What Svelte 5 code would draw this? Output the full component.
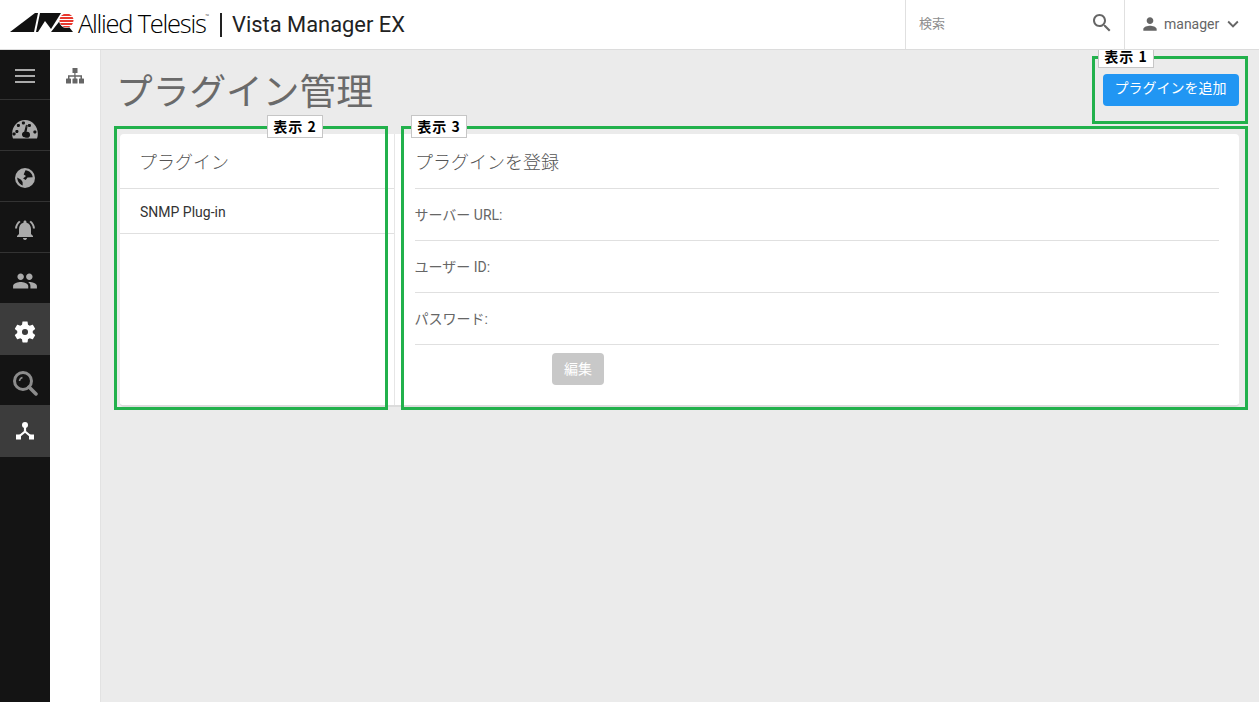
<script>
  const navTop = [
    { id: 'menu' }, { id: 'gauge' }, { id: 'globe' }, { id: 'bell' }, { id: 'people' },
    { id: 'gear', active: true }, { id: 'loupe' }, { id: 'node', active: true }
  ];
  const fields = ['サーバー URL:', 'ユーザー ID:', 'パスワード:'];
</script>

<div class="page">
  <header class="top">
    <div class="brand">
      <svg class="mark" width="66" height="22" viewBox="0 0 66 22">
        <polygon points="0,20 25,1 28,1 24,20" fill="#111" />
        <polygon points="30,1 51,1 41,17 35,9 28,20 26,20" fill="#111" />
        <polygon points="41,20 52,6 63,20" fill="#111" />
        <circle cx="56.500" cy="8.500" r="7.500" fill="#fff" />
        <clipPath id="ball"><circle cx="56.500" cy="8.500" r="7" /></clipPath>
        <g clip-path="url(#ball)" fill="#e8382e">
          <rect x="48" y="2" width="17" height="2" />
          <rect x="48" y="5" width="17" height="2" />
          <rect x="48" y="8" width="17" height="2" />
          <rect x="48" y="11" width="17" height="2" />
          <rect x="48" y="14" width="17" height="2" />
        </g>
      </svg>
      <span class="at">Allied Telesis<sup>™</sup></span>
      <span class="bar"></span>
      <span class="vm">Vista Manager EX</span>
    </div>
    <div class="search">
      <span class="ph">検索</span>
      <svg width="24" height="24" viewBox="0 0 24 24"><path fill="#666" d="M15.5 14h-.79l-.28-.27C15.41 12.59 16 11.11 16 9.5 16 5.91 13.09 3 9.5 3S3 5.91 3 9.5 5.91 16 9.5 16c1.61 0 3.09-.59 4.23-1.57l.27.28v.79l5 4.99L20.49 19l-4.99-5zm-6 0C7.01 14 5 11.99 5 9.5S7.01 5 9.5 5 14 7.01 14 9.5 11.99 14 9.5 14z" /></svg>
    </div>
    <div class="user">
      <svg width="20" height="20" viewBox="0 0 24 24"><path fill="#666" d="M12 12c2.21 0 4-1.79 4-4s-1.79-4-4-4-4 1.79-4 4 1.79 4 4 4zm0 2c-2.67 0-8 1.34-8 4v2h16v-2c0-2.66-5.33-4-8-4z" /></svg>
      <span>manager</span>
      <svg width="22" height="22" viewBox="0 0 24 24"><path fill="#666" d="M7.41 8.59L12 13.17l4.59-4.58L18 10l-6 6-6-6 1.41-1.41z" /></svg>
    </div>
  </header>

  <div class="body">
    <nav class="rail">
      {#each navTop as item}
        <div class="rail-item {item.id}" class:active={item.active}>
          {#if item.id === 'menu'}
            <svg width="24" height="24" viewBox="0 0 24 24"><path fill="#aaa" d="M2 5h20v2H2zM2 11h20v2H2zM2 17h20v2H2z" /></svg>
          {:else if item.id === 'gauge'}
            <svg width="26" height="22" viewBox="0 0 26 22"><path fill="#aaa" fill-rule="evenodd" d="M1 20.5C.4 19 .2 17.5.2 15.5.2 8 6 2 13 2s12.8 6 12.8 13.5c0 2-.2 3.500-.8 5zM6.500 13.500a1.600 1.600 0 1 0 0 .01zM3.700 16a1.600 1.600 0 1 0 0 .01zM8 7.500a1.600 1.600 0 1 0 0 .01zM13 5a1.600 1.600 0 1 0 0 .01zM19 7.500a1.600 1.600 0 1 0 0 .01zM24.500 14a1.600 1.600 0 1 0 0 .01zM13.300 13.500l1.500-6.500.9.200-1.100 6.700a3 3 0 1 1-2.600 2.800 3 3 0 0 1 1.300-3.200z" /><path fill="#141414" d="M12.200 13.700l1.800-7 .9.200-1.200 6.900a2.800 2.800 0 1 1-1.500-.1z" /></svg>
          {:else if item.id === 'globe'}
            <svg width="24" height="24" viewBox="0 0 24 24"><circle cx="12" cy="12" r="10" fill="#aaa" /><path fill="#141414" d="M12.500 4.300c3.800.3 6.800 3.200 7.200 6.900l-5.200.3-1.800 2.500-2.600-1.600 2.900-2.300-2.300-1.700zM4.200 11.400l3.900 2.300 1.500 2.400.1 3.300c-3-1-5.300-4.200-5.500-8z" /></svg>
          {:else if item.id === 'bell'}
            <svg width="24" height="24" viewBox="0 0 24 24"><path fill="#aaa" d="M7.580 4.080L6.150 2.650C3.750 4.480 2.170 7.300 2.030 10.500h2c.15-2.650 1.510-4.970 3.550-6.420zm12.390 6.420h2c-.15-3.200-1.730-6.020-4.120-7.850l-1.420 1.430c2.020 1.450 3.390 3.770 3.540 6.420zM18 11c0-3.070-1.640-5.640-4.500-6.320V4c0-.83-.67-1.500-1.500-1.500s-1.500.67-1.500 1.500v.68C7.630 5.360 6 7.920 6 11v5l-2 2v1h16v-1l-2-2v-5zm-6 11c.14 0 .27-.01.4-.04.65-.14 1.180-.58 1.440-1.180.1-.24.15-.5.15-.78h-4c.01 1.100.9 2 2.010 2z" /></svg>
          {:else if item.id === 'people'}
            <svg width="26" height="26" viewBox="0 0 24 24"><path fill="#aaa" d="M16 11c1.660 0 2.990-1.340 2.990-3S17.660 5 16 5c-1.660 0-3 1.340-3 3s1.340 3 3 3zm-8 0c1.660 0 2.990-1.340 2.990-3S9.660 5 8 5C6.340 5 5 6.340 5 8s1.340 3 3 3zm0 2c-2.330 0-7 1.170-7 3.500V19h14v-2.500c0-2.330-4.670-3.500-7-3.500zm8 0c-.29 0-.62.02-.97.05 1.160.84 1.970 1.970 1.970 3.450V19h6v-2.500c0-2.330-4.670-3.500-7-3.500z" /></svg>
          {:else if item.id === 'gear'}
            <svg width="26" height="26" viewBox="0 0 24 24"><path fill="#fff" fill-rule="evenodd" d="M19.140 12.940c.04-.3.06-.61.06-.94 0-.32-.02-.64-.07-.94l2.030-1.580c.18-.14.23-.41.12-.61l-1.920-3.320c-.12-.22-.37-.29-.59-.22l-2.390.96c-.5-.38-1.030-.7-1.620-.94L14.400 2.810c-.04-.24-.24-.41-.48-.41h-3.840c-.24 0-.43.17-.47.41L9.250 5.350c-.59.24-1.130.57-1.620.94l-2.390-.96c-.22-.08-.47 0-.59.22L2.740 8.870c-.12.21-.08.47.12.61l2.030 1.580c-.05.3-.09.63-.09.94s.02.64.07.94l-2.030 1.580c-.18.14-.23.41-.12.61l1.920 3.320c.12.22.37.29.59.22l2.390-.96c.5.38 1.030.7 1.620.94l.36 2.540c.05.24.24.41.48.41h3.840c.24 0 .44-.17.47-.41l.36-2.540c.59-.24 1.130-.56 1.620-.94l2.390.96c.22.08.47 0 .59-.22l1.920-3.320c.12-.22.07-.47-.12-.61l-2.010-1.580zM12 14.800a2.800 2.800 0 1 1 0-5.600 2.800 2.800 0 0 1 0 5.600z" /></svg>
          {:else if item.id === 'loupe'}
            <svg width="26" height="26" viewBox="0 0 26 26"><circle cx="11" cy="11" r="8.500" fill="none" stroke="#8c8c8c" stroke-width="3" /><path d="M17 17l7 7" stroke="#8c8c8c" stroke-width="3.500" stroke-linecap="round" /><path d="M7.500 11a4 4 0 0 1 3-3.500" fill="none" stroke="#8c8c8c" stroke-width="1.500" /></svg>
          {:else}
            <svg width="20" height="20" viewBox="0 0 20 20"><circle cx="10" cy="4" r="3" fill="#fff" /><path d="M10 6v4.500L4 15.500M10 10.500l6 5" fill="none" stroke="#fff" stroke-width="2.200" /><rect x="1" y="13.500" width="5" height="5" fill="#fff" /><rect x="14" y="13.500" width="5" height="5" fill="#fff" /></svg>
          {/if}
        </div>
      {/each}
    </nav>

    <aside class="sub">
      <svg width="18" height="16" viewBox="0 0 18 16">
        <path fill="#666" d="M6.500 0h5v5h-2v2.200h6.500V11h-1.500V8.700H9.700V11H8.300V8.700H3.500V11H2V7.200h6.300V5h-1.800z" />
        <rect x="0" y="10.500" width="5" height="5" rx=".6" fill="#666" />
        <rect x="6.500" y="10.500" width="5" height="5" rx=".6" fill="#666" />
        <rect x="13" y="10.500" width="5" height="5" rx=".6" fill="#666" />
      </svg>
    </aside>

    <main class="main">
      <div class="head">
        <h1>プラグイン管理</h1>
        <button class="add">プラグインを追加</button>
      </div>

      <section class="card">
        <div class="left">
          <h2 class="left-title">プラグイン</h2>
          <div class="plug">SNMP Plug-in</div>
        </div>
        <div class="right">
          <h2 class="right-title">プラグインを登録</h2>
          {#each fields as f}
            <div class="field">{f}</div>
          {/each}
          <button class="edit" disabled>編集</button>
        </div>
      </section>

      <div class="mark-box box1"><span class="tag">表示 1</span></div>
      <div class="mark-box box2"><span class="tag">表示 2</span></div>
      <div class="mark-box box3"><span class="tag">表示 3</span></div>
    </main>
  </div>
</div>

<style>
  :global(body) {
    margin: 0;
    overflow: hidden;
  }
  .page {
    --cjk: Roboto, "Noto Sans CJK JP", sans-serif;
    height: 702px;
    display: flex;
    flex-direction: column;
    font-family: var(--cjk);
    background: #ebebeb;
  }
  .top {
    height: 50px;
    box-sizing: border-box;
    flex: none;
    display: flex;
    align-items: stretch;
    background: #fff;
    border-bottom: 1px solid #dcdcdc;
    position: relative;
    z-index: 2;
  }
  .brand {
    width: 905px;
    flex: none;
    display: flex;
    align-items: center;
    padding-left: 10px;
    box-sizing: border-box;
  }
  .mark {
    flex: none;
    margin-top: -4px;
  }
  .at {
    font-family: "Open Sans", sans-serif;
    font-weight: 300;
    font-size: 25.500px;
    letter-spacing: -1.250px;
    color: #000;
    margin-left: 2px;
    margin-top: -4px;
    width: 134px;
    white-space: nowrap;
  }
  .at sup {
    font-size: 5px;
    vertical-align: 15px;
    line-height: 0;
  }
  .bar {
    width: 2px;
    height: 24px;
    background: #222;
    margin-left: 8px;
    flex: none;
  }
  .vm {
    font-size: 21.900px;
    color: #222;
    margin-left: 10px;
  }
  .search {
    width: 220px;
    box-sizing: border-box;
    flex: none;
    display: flex;
    align-items: center;
    justify-content: space-between;
    border-left: 1px solid #e0e0e0;
    border-right: 1px solid #e0e0e0;
    padding: 0 10px 3px 13px;
  }
  .ph {
    font-size: 13px;
    color: #8e8e8e;
    margin-bottom: 1px;
  }
  .user {
    flex: 1;
    display: flex;
    align-items: center;
    padding: 0 0 2px 15px;
    color: #666;
    font-size: 14px;
  }
  .user span {
    margin: 0 3px 0 4px;
  }
  .body {
    flex: 1;
    display: flex;
    min-height: 0;
  }
  .rail {
    width: 50px;
    flex: none;
    background: #141414;
    margin-top: -1px;
  }
  .rail-item {
    height: 51px;
    display: flex;
    align-items: center;
    justify-content: center;
    border-bottom: 1px solid #333;
    box-sizing: border-box;
  }
  .rail-item.people,
  .rail-item.loupe {
    height: 50px;
    border-bottom: 0;
  }
  .rail-item.active {
    background: #3c3c3c;
    height: 52px;
    border-bottom: 0;
  }
  .rail-item.menu {
    padding-top: 4px;
  }
  .rail-item.gauge {
    padding-top: 7px;
  }
  .rail-item.globe {
    padding-top: 4px;
  }
  .rail-item.bell {
    padding-top: 6px;
  }
  .rail-item.people,
  .rail-item.gear,
  .rail-item.loupe {
    padding-top: 5px;
  }
  .sub {
    width: 51px;
    box-sizing: border-box;
    flex: none;
    background: #fff;
    border-right: 1px solid #e2e2e2;
    display: flex;
    justify-content: center;
    padding: 18px 1px 0 0;
  }
  .main {
    flex: 1;
    position: relative;
    padding: 0 20px 0 19px;
    min-width: 0;
  }
  .head {
    height: 84px;
    display: flex;
    justify-content: space-between;
    align-items: flex-start;
  }
  h1 {
    margin: 21px 0 0 -4px;
    font-size: 36.700px;
    line-height: 44px;
    font-weight: 400;
    color: #6a6a6a;
  }
  .add {
    margin-top: 24px;
    width: 136px;
    height: 32px;
    border: 0;
    border-radius: 4px;
    background: #2196f3;
    color: #fff;
    font: 14px var(--cjk);
    padding: 0 1px 6px 0;
  }
  .card {
    height: 273px;
    display: flex;
    background: #fff;
    border-radius: 4px;
    border-bottom: 2px solid #dcdcdc;
    box-sizing: border-box;
  }
  .left {
    width: 275px;
    flex: none;
    box-sizing: border-box;
    border-right: 1px solid #e6e6e6;
  }
  h2 {
    margin: 0;
    height: 55px;
    box-sizing: border-box;
    font-size: 18px;
    font-weight: 300;
    color: #555;
    line-height: 58px;
    border-bottom: 1px solid #e0e0e0;
  }
  .left-title {
    padding-left: 19px;
  }
  .plug {
    height: 45px;
    box-sizing: border-box;
    border-bottom: 1px solid #e0e0e0;
    padding-left: 20px;
    font-size: 14px;
    line-height: 46px;
    color: #333;
  }
  .right {
    flex: 1;
    padding: 0 20px;
    min-width: 0;
  }
  .field {
    height: 52px;
    box-sizing: border-box;
    border-bottom: 1px solid #e0e0e0;
    font-size: 14px;
    line-height: 52px;
    color: #666;
    text-indent: -0.500px;
  }
  .edit {
    display: block;
    margin: 8px 0 0 137px;
    width: 52px;
    height: 32px;
    border: 0;
    border-radius: 4px;
    background: #c8c8c8;
    color: #fff;
    font: 14px var(--cjk);
    padding: 0 0 3px;
  }
  .mark-box {
    position: absolute;
    border: 3px solid #22b14c;
    box-sizing: border-box;
    pointer-events: none;
  }
  .box1 {
    left: 991px;
    top: 6px;
    width: 156px;
    height: 68px;
  }
  .box2 {
    left: 13px;
    top: 76px;
    width: 274px;
    height: 284px;
  }
  .box3 {
    left: 300px;
    top: 76px;
    width: 847px;
    height: 284px;
  }
  .tag {
    position: absolute;
    top: -14px;
    width: 56px;
    height: 23px;
    box-sizing: border-box;
    background: #fff;
    border: 1px solid #c6c6c6;
    font-size: 14px;
    font-weight: 700;
    color: #000;
    text-align: center;
    line-height: 20px;
    letter-spacing: 1px;
    font-family: "Noto Sans CJK JP", sans-serif;
  }
  .box1 .tag {
    left: 3px;
  }
  .box2 .tag {
    left: 150px;
  }
  .box3 .tag {
    left: 7px;
  }
</style>
